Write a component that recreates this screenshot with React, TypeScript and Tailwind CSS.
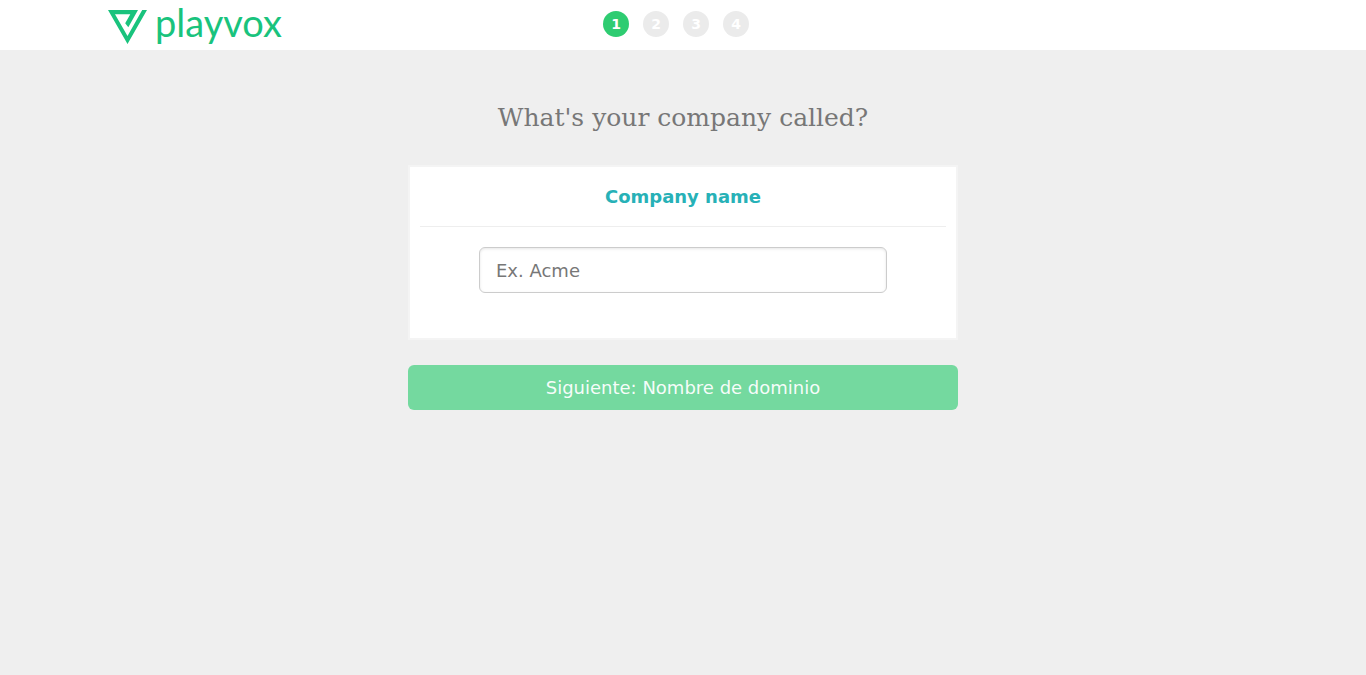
import { useState } from 'react';

const steps = [1, 2, 3, 4];

function Logo() {
  return (
    <a href="#" aria-label="playvox" className="flex h-[50px] items-start gap-2 text-[#19c37d]">
      <svg viewBox="0 0 39 34" className="mt-[10px] h-[34px] w-[39px] shrink-0" fill="currentColor" aria-hidden="true">
        <path
          fillRule="evenodd"
          d="M0 0H30L20.3 17.2L17.2 13.2L22.3 4.2H7L19.5 26L34.2 0H39L19.5 34Z"
        />
      </svg>
      <span className="font-['Lato',sans-serif] text-[38px] leading-[44px]">playvox</span>
    </a>
  );
}

function Steps({ current }: { current: number }) {
  return (
    <ol className="flex pt-[11px]">
      {steps.map((step) => (
        <li
          key={step}
          aria-current={step === current ? 'step' : undefined}
          className={`mr-3.5 flex size-[26px] items-center justify-center rounded-full text-sm font-bold text-white ${
            step === current ? 'bg-[#2ecc71]' : 'bg-[#ebebeb]'
          }`}
        >
          {step}
        </li>
      ))}
    </ol>
  );
}

export default function App() {
  const [company, setCompany] = useState('');

  return (
    <div className="min-h-screen bg-[#efefef] font-['DejaVu_Sans',sans-serif]">
      <header className="bg-white">
        <div className="mx-auto grid max-w-[1170px] grid-cols-[1fr_auto_1fr] px-2.5">
          <Logo />
          <Steps current={1} />
        </div>
      </header>

      <main className="mx-auto max-w-[550px] pt-[50px]">
        <h1 className="text-center font-['DejaVu_Serif',serif] text-[25px] leading-9 text-[#777777]">
          What's your company called?
        </h1>
        <form onSubmit={(event) => event.preventDefault()}>
          <section className="mt-[29px] border-2 border-[#f4f4f4] bg-white px-2.5 pb-[45px]">
            <label
              htmlFor="company"
              className="block border-b border-[#eeeeee] pt-4 pb-[15px] text-center text-lg font-bold text-[#27b1b7]"
            >
              Company name
            </label>
            <div className="px-[59px] pt-5">
              <input
                id="company"
                type="text"
                placeholder="Ex. Acme"
                value={company}
                onChange={(event) => setCompany(event.target.value)}
                className="block h-[46px] w-full rounded-md border border-[#cccccc] bg-white px-4 text-lg text-[#555555] shadow-[inset_0_1px_3px_rgba(0,0,0,0.1)] outline-none placeholder:text-[#777777] focus:border-[#27b1b7]"
              />
            </div>
          </section>
          <button
            type="submit"
            className="mt-[25px] block h-[45px] w-full rounded-md bg-[#74d99f] text-lg text-white/95"
          >
            Siguiente: Nombre de dominio
          </button>
        </form>
      </main>
    </div>
  );
}
